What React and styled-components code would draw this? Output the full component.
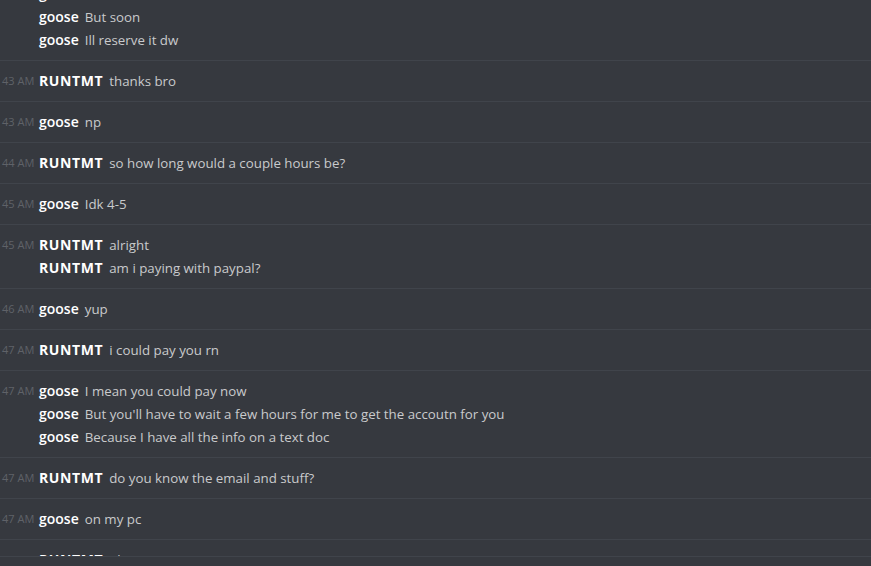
import React from "react";
import styled, { createGlobalStyle } from "styled-components";

const Global = createGlobalStyle`
  html, body { margin: 0; padding: 0; background: #36393f; }
  body { font-family: "Open Sans", "Liberation Sans", sans-serif; overflow: hidden; }
`;

const Screen = styled.div`
  width: 871px;
  height: 566px;
  background: #36393f;
  display: flex;
  flex-direction: column;
  overflow: hidden;
`;

const Scroller = styled.div`
  height: 556px;
  overflow: hidden;
  flex: none;
`;

const List = styled.div`
  margin-top: -26px;
  display: flex;
  flex-direction: column;
`;

const Group = styled.div`
  padding: 8px 0 9px;
  border-bottom: 1px solid #40444b;
  display: flex;
  flex-direction: column;
`;

const Line = styled.div`
  display: flex;
  align-items: center;
  height: 23px;
  white-space: nowrap;
`;

const Stamp = styled.span`
  width: 39px;
  flex: none;
  padding-left: 2px;
  box-sizing: border-box;
  font-size: 11px;
  color: #5f6268;
`;

const Name = styled.span`
  color: #ffffff;
  font-size: 14px;
  font-weight: ${(p) => (p.$bold ? 700 : 600)};
  letter-spacing: ${(p) => (p.$bold ? "0.6px" : "0")};
  margin-right: 6px;
`;

const Text = styled.span`
  color: #c9cacc;
  font-size: 13.3px;
`;

const Footer = styled.div`
  flex: 1;
  border-top: 1px solid #40444b;
`;

const groups = [
  {
    time: "",
    lines: [
      ["goose", "Idk if I can rn"],
      ["goose", "But soon"],
      ["goose", "Ill reserve it dw"],
    ],
  },
  { time: "43 AM", lines: [["RUNTMT", "thanks bro"]] },
  { time: "43 AM", lines: [["goose", "np"]] },
  { time: "44 AM", lines: [["RUNTMT", "so how long would a couple hours be?"]] },
  { time: "45 AM", lines: [["goose", "Idk 4-5"]] },
  {
    time: "45 AM",
    lines: [
      ["RUNTMT", "alright"],
      ["RUNTMT", "am i paying with paypal?"],
    ],
  },
  { time: "46 AM", lines: [["goose", "yup"]] },
  { time: "47 AM", lines: [["RUNTMT", "i could pay you rn"]] },
  {
    time: "47 AM",
    lines: [
      ["goose", "I mean you could pay now"],
      ["goose", "But you'll have to wait a few hours for me to get the accoutn for you"],
      ["goose", "Because I have all the info on a text doc"],
    ],
  },
  { time: "47 AM", lines: [["RUNTMT", "do you know the email and stuff?"]] },
  { time: "47 AM", lines: [["goose", "on my pc"]] },
  { time: "48 AM", lines: [["RUNTMT", "ok"]] },
];

export default function App() {
  return (
    <Screen>
      <Global />
      <Scroller>
        <List>
          {groups.map((g, i) => (
            <Group key={i}>
              {g.lines.map(([name, text], j) => (
                <Line key={j}>
                  <Stamp>{j === 0 ? g.time : ""}</Stamp>
                  <Name $bold={name === "RUNTMT"}>{name}</Name>
                  <Text>{text}</Text>
                </Line>
              ))}
            </Group>
          ))}
        </List>
      </Scroller>
      <Footer />
    </Screen>
  );
}
